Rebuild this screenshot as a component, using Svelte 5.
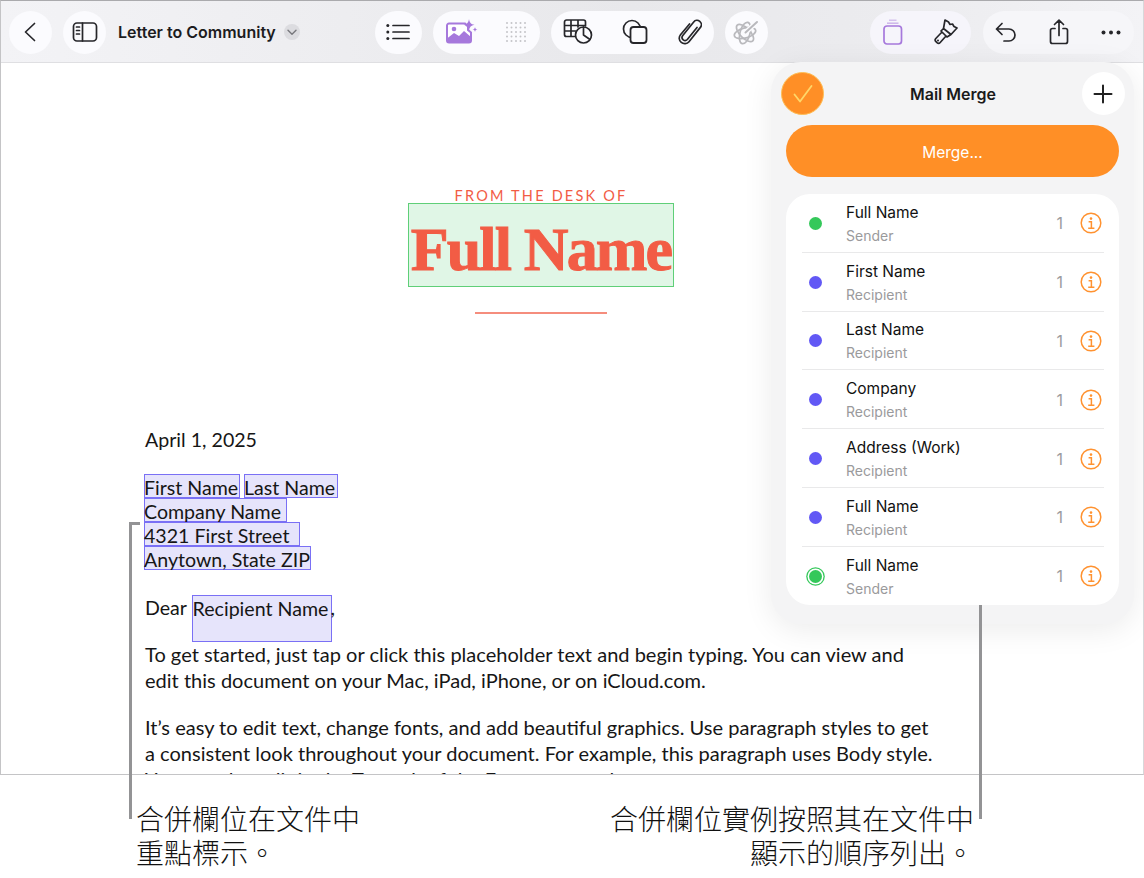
<script>
	const fields = [
		{ name: 'Full Name', role: 'Sender', color: 'green' },
		{ name: 'First Name', role: 'Recipient', color: 'violet' },
		{ name: 'Last Name', role: 'Recipient', color: 'violet' },
		{ name: 'Company', role: 'Recipient', color: 'violet' },
		{ name: 'Address (Work)', role: 'Recipient', color: 'violet' },
		{ name: 'Full Name', role: 'Recipient', color: 'violet' },
		{ name: 'Full Name', role: 'Sender', color: 'green', current: true }
	];
</script>

<div class="figure">
	<div class="window">
		<header class="toolbar">
			<button class="pill round" type="button" aria-label="Back">
				<svg width="24" height="24" viewBox="0 0 24 24"><path class="ink thin" d="M15.500 3.500 6.500 12l9 8.500" /></svg>
			</button>
			<button class="pill round" type="button" aria-label="Sidebar">
				<svg width="26" height="24" viewBox="0 0 26 24"><rect class="ink thin" x="1.500" y="3" width="23" height="18" rx="3.500" /><path class="ink thin" d="M10.500 3v18" /><path class="ink thin" d="M4.500 7h3M4.500 10.500h3M4.500 14h3" /></svg>
			</button>
			<span class="doc-title">Letter to Community</span>
			<span class="title-chevron">
				<svg width="10" height="7" viewBox="0 0 10 7"><path d="M1 1.200 5 5.200l4-4" fill="none" stroke="#77777c" stroke-width="1.400" stroke-linecap="round" stroke-linejoin="round" /></svg>
			</span>

			<button class="pill list-btn" type="button" aria-label="List">
				<svg width="24" height="20" viewBox="0 0 24 20"><path class="ink thin" d="M7 3.500h16M7 10h16M7 16.500h16" /><circle cx="1.800" cy="3.500" r="1.500" fill="#26262a" /><circle cx="1.800" cy="10" r="1.500" fill="#26262a" /><circle cx="1.800" cy="16.500" r="1.500" fill="#26262a" /></svg>
			</button>

			<div class="pill media">
				<svg width="32" height="26" viewBox="0 0 32 26"><path d="M3 4.500h16l3 3v3.500l3 2.500V21.500a2 2 0 0 1-2 2H3a2 2 0 0 1-2-2V6.500a2 2 0 0 1 2-2Z" fill="#fff" stroke="#a678dc" stroke-width="2" /><path d="M1 19.500l7-5.500 5 3 5-5 7 6v3.500a2 2 0 0 1-2 2H3a2 2 0 0 1-2-2Z" fill="#a678dc" /><circle cx="8" cy="10" r="2.300" fill="#a678dc" /><path d="M23 0c.5 3.600 2 5.200 5.500 5.800C25 6.400 23.500 8 23 11.500c-.5-3.500-2-5.100-5.500-5.700C21 5.200 22.500 3.600 23 0Z" fill="#a678dc" /><path d="M29 8c.2 1.600.8 2.300 2.500 2.500-1.700.2-2.300.9-2.500 2.500-.2-1.600-.8-2.300-2.500-2.500 1.700-.2 2.300-.9 2.500-2.500Z" fill="#a678dc" /></svg>
				<svg class="dots" width="22" height="22" viewBox="0 0 22 22">
					{#each [2, 6.500, 11, 15.500, 20] as y}
						{#each [2, 6.500, 11, 15.500, 20] as x}
							<circle cx={x} cy={y} r="1" fill="#c4c4c8" />
						{/each}
					{/each}
				</svg>
			</div>

			<div class="pill insert">
				<svg width="30" height="26" viewBox="0 0 30 26"><path class="ink thin" d="M12 17.500H3.500a2 2 0 0 1-2-2V3a2 2 0 0 1 2-2h17a2 2 0 0 1 2 2v4M1.500 6.500h21M1.500 12h11M8 1v16.500M15 1v7" /><circle cx="20.500" cy="16" r="8" fill="#fbfbfe" stroke="#26262a" stroke-width="1.700" /><path class="ink thin" d="M20.500 16V8M20.500 16l6.500 4.500" /></svg>
				<svg width="26" height="26" viewBox="0 0 26 26"><circle class="ink thin" cx="10" cy="10" r="8.500" /><rect x="8.500" y="8" width="16" height="16" rx="3" fill="#fbfbfe" stroke="#26262a" stroke-width="1.800" /></svg>
				<svg width="24" height="26" viewBox="0 0 24 26"><path class="ink thin" d="M19 8.500 9.300 20.500a3 3 0 0 1-4.700-3.700L15.700 3a4.300 4.300 0 0 1 6.700 5.400L11 22.700a5.500 5.500 0 0 1-8.500-7L11.500 5" /></svg>
			</div>

			<button class="pill round faded" type="button" aria-label="Writing tools">
				<svg width="28" height="26" viewBox="0 0 28 26" fill="none" stroke="#b9b9bd" stroke-width="1.700"><ellipse cx="13" cy="14" rx="11" ry="5" transform="rotate(45 13 14)" /><ellipse cx="13" cy="14" rx="11" ry="5" transform="rotate(-15 13 14)" /><ellipse cx="13" cy="14" rx="11" ry="5" transform="rotate(105 13 14)" /><path d="M13 14 26 2" stroke="#fbfbfe" stroke-width="5" /><path d="M13.500 13.500 25 3" stroke-width="2" stroke-linecap="round" /></svg>
			</button>

			<div class="pill format">
				<svg width="20" height="26" viewBox="0 0 20 26"><rect x="1" y="7" width="17.500" height="18" rx="3" fill="none" stroke="#a678dc" stroke-width="1.700" /><path d="M4 4.200h11.500" stroke="#cdb4ea" stroke-width="1.500" /><path d="M6 1.200h7.500" stroke="#cdb4ea" stroke-width="1.200" /></svg>
				<svg width="24" height="26" viewBox="0 0 24 26"><path class="ink thin" d="M11 1 14.500 3 16 5.500 18.500 5 20 7.500 23 9 17 15.500 9.500 9.500ZM9.500 9.500 7 12l6 6 4-2.500M8 13 1.800 19.500a2.300 2.300 0 0 0 .2 3.200l1 1a2.300 2.300 0 0 0 3.200-.2L12 17" /><circle cx="4" cy="21.500" r="1" fill="#26262a" /></svg>
			</div>

			<div class="pill actions">
				<svg width="22" height="20" viewBox="0 0 22 20"><path class="ink thin" d="M7 1.500 1.500 7 7 12.500M1.500 7H14a6 6 0 0 1 0 12h-5" /></svg>
				<svg width="20" height="26" viewBox="0 0 20 26"><path class="ink thin" d="M6 9.500H3.500a2 2 0 0 0-2 2v11a2 2 0 0 0 2 2h13a2 2 0 0 0 2-2v-11a2 2 0 0 0-2-2H14M10 16.500V1.500M5.500 5.500 10 1.200l4.500 4.300" /></svg>
				<svg width="20" height="5" viewBox="0 0 20 5"><circle cx="2.500" cy="2.500" r="2" fill="#26262a" /><circle cx="10" cy="2.500" r="2" fill="#26262a" /><circle cx="17.500" cy="2.500" r="2" fill="#26262a" /></svg>
			</div>
		</header>

		<main class="page">
			<div class="letterhead">
				<p class="desk">FROM THE DESK OF</p>
				<h1 class="sender">Full Name</h1>
				<div class="rule"></div>
			</div>

			<p class="date">April 1, 2025</p>

			<div class="address">
				<div><span class="field w-first">First Name</span><span class="field w-last">Last Name</span></div>
				<div><span class="field w-company">Company Name</span></div>
				<div><span class="field w-street">4321 First Street</span></div>
				<div><span class="field w-town">Anytown, State ZIP</span></div>
			</div>

			<p class="dear">Dear <span class="field w-recipient">Recipient Name</span>,</p>

			<p class="body-text">To get started, just tap or click this placeholder text and begin typing. You can view and edit this document on your Mac, iPad, iPhone, or on iCloud.com.</p>
			<p class="body-text">It’s easy to edit text, change fonts, and add beautiful graphics. Use paragraph styles to get a consistent look throughout your document. For example, this paragraph uses Body style. You can also edit in the Text tab of the Format controls.</p>
		</main>

		<aside class="panel">
			<div class="panel-head">
				<button class="done" type="button" aria-label="Done">
					<svg width="22" height="20" viewBox="0 0 22 20"><path d="M2.500 10.500 8 17.500 19.500 2" fill="none" stroke="#ffd769" stroke-width="1.800" stroke-linecap="round" stroke-linejoin="round" /></svg>
				</button>
				<h2>Mail Merge</h2>
				<button class="add" type="button" aria-label="Add">
					<svg width="20" height="20" viewBox="0 0 20 20"><path d="M10 1.500v17M1.500 10h17" stroke="#222" stroke-width="2" stroke-linecap="round" /></svg>
				</button>
			</div>
			<button class="merge" type="button">Merge...</button>
			<ul class="field-list">
				{#each fields as f}
					<li>
						<span class="dot {f.color}" class:current={f.current}></span>
						<div class="field-text">
							<strong>{f.name}</strong>
							<small>{f.role}</small>
						</div>
						<span class="count">1</span>
						<svg class="info" width="22" height="22" viewBox="0 0 22 22"><circle cx="11" cy="11" r="9.800" fill="none" stroke="#ff9230" stroke-width="1.500" /><circle cx="11" cy="6.600" r="1.300" fill="#ff9230" /><path d="M8.600 9.800H11.400V16M8.200 16.200h6.200" fill="none" stroke="#ff9230" stroke-width="1.500" /></svg>
					</li>
				{/each}
			</ul>
		</aside>
	</div>

	<div class="captions">
		<p>合併欄位在文件中<br />重點標示。</p>
		<p class="right">合併欄位實例按照其在文件中<br />顯示的順序列出。</p>
	</div>

	<!-- callout leaders drawn over the screenshot -->
	<div class="leader left"></div>
	<div class="leader right"></div>
</div>

<style>
	:global(body) {
		margin: 0;
		background: #fff;
	}

	.figure {
		position: relative;
		width: 1144px;
		height: 878px;
		overflow: hidden;
		font-family: Inter, "Noto Sans", sans-serif;
		color: #111;
	}

	.window {
		position: relative;
		height: 775px;
		box-sizing: border-box;
		border: 1px solid #c4c4c6;
		border-top-color: #aaaaad;
		border-right-color: #d8d8da;
		overflow: hidden;
	}

	.toolbar {
		height: 62px;
		box-sizing: border-box;
		display: flex;
		align-items: center;
		padding: 1px 9px 0 8px;
		background: linear-gradient(90deg, #f3f3f6 0%, #eeeef1 25%, #e8e8eb 55%, #ececef 80%, #f3f3f6 100%);
		border-bottom: 1px solid #dfdfe2;
	}

	.pill {
		height: 43px;
		border: 0;
		border-radius: 22px;
		padding: 0;
		background: #fbfbfe;
		display: flex;
		align-items: center;
		flex-shrink: 0;
	}

	.round {
		width: 43px;
		justify-content: center;
		margin-right: 11px;
	}

	.doc-title {
		margin-left: 1px;
		font-size: 16px;
		font-weight: 600;
		letter-spacing: 0;
		color: #1c1c1e;
		white-space: nowrap;
	}

	.title-chevron {
		width: 16px;
		height: 16px;
		margin-left: 8px;
		margin-right: 75px;
		border-radius: 50%;
		background: #dcdce0;
		display: grid;
		place-items: center;
	}

	.list-btn {
		width: 47px;
		justify-content: center;
		margin-right: 11px;
	}

	.media {
		width: 107px;
		justify-content: space-between;
		box-sizing: border-box;
		padding: 0 13px 0 13px;
		margin-right: 11px;
	}

	.insert {
		width: 163px;
		justify-content: space-between;
		box-sizing: border-box;
		padding: 0 12px 0 12px;
		margin-right: 11px;
	}

	.faded {
		margin-right: 102px;
	}

	.format {
		width: 101px;
		justify-content: space-between;
		box-sizing: border-box;
		padding: 0 13px 0 13px;
		margin-right: 12px;
		background: #f6f5fb;
	}

	.actions {
		width: 151px;
		justify-content: space-between;
		box-sizing: border-box;
		padding: 0 13px 0 12px;
		background: #f6f6f9;
	}

	.ink {
		fill: none;
		stroke: #26262a;
		stroke-width: 2;
		stroke-linecap: round;
		stroke-linejoin: round;
	}

	.thin {
		stroke-width: 1.700;
	}

	.page {
		padding: 122px 0 0 144px;
		width: 792px;
		font-family: Lato, "Open Sans", sans-serif;
		font-size: 19.600px;
		line-height: 24px;
		color: #161616;
	}

	.page p {
		margin: 0;
	}

	.letterhead {
		display: flex;
		flex-direction: column;
		align-items: center;
	}

	.page .desk {
		font-size: 14.500px;
		line-height: 22px;
		margin-bottom: -4px;
		letter-spacing: 2.200px;
		color: #f25c45;
	}

	.sender {
		width: 266px;
		height: 84px;
		box-sizing: border-box;
		margin: 0;
		border: 1px solid #5fcf78;
		background: #e0f6e6;
		text-align: center;
		font-family: "Liberation Serif", serif;
		font-size: 62px;
		line-height: 90px;
		font-weight: 700;
		letter-spacing: -0.030em;
		color: #f25c45;
		-webkit-text-stroke: 1px #f25c45;
		white-space: nowrap;
	}

	.rule {
		width: 132px;
		height: 2px;
		margin-top: 25px;
		background: #f58d7d;
	}

	.page .date {
		margin-top: 114px;
	}

	.address {
		margin: 22px 0 0 -1px;
	}

	.address div {
		height: 24px;
		display: flex;
		gap: 4px;
	}

	.field {
		display: inline-block;
		box-sizing: border-box;
		height: 24px;
		border: 1px solid #7a70f5;
		background: #e6e4fb;
		white-space: nowrap;
		line-height: 25px;
		text-indent: -1px;
		overflow: visible;
	}

	.w-first { width: 96px; }
	.w-last { width: 94px; }
	.w-company { width: 143px; }
	.w-street { width: 156px; }
	.w-town { width: 167px; }

	.w-recipient {
		width: 140px;
		height: 47px;
		margin-bottom: -23px;
		margin-right: -1px;
		text-indent: 0;
		vertical-align: top;
	}

	.page .dear {
		margin-top: 25px;
		height: 25px;
		line-height: 26px;
	}

	.page .body-text {
		margin-top: 21px;
		font-size: 20.050px;
		line-height: 26px;
		width: 792px;
	}

	.panel {
		position: absolute;
		top: 61px;
		left: 770px;
		width: 363px;
		height: 562px;
		box-sizing: border-box;
		padding: 10px 15px 20px;
		border-radius: 30px;
		background: #f4f4f5;
		box-shadow: 0 6px 30px rgba(0, 0, 0, 0.08);
	}

	.panel-head {
		display: flex;
		align-items: center;
		justify-content: space-between;
		margin: 0 -6px 10px -5px;
	}

	.panel-head h2 {
		margin: 0;
		font-size: 16px;
		font-weight: 600;
		color: #1a1a1a;
	}

	.done,
	.add {
		width: 43px;
		height: 43px;
		padding: 0;
		border-radius: 50%;
		display: grid;
		place-items: center;
		flex-shrink: 0;
	}

	.done {
		border: 1px solid #ffbe55;
		background: #ff8f26;
	}

	.add {
		border: 0;
		background: #fff;
	}

	.merge {
		display: block;
		width: 100%;
		height: 52px;
		padding: 2px 0 0;
		border: 0;
		border-radius: 26px;
		background: #ff8f26;
		color: #fff;
		font: inherit;
		font-size: 15.500px;
	}

	.field-list {
		list-style: none;
		margin: 17px 0 0;
		padding: 0;
		height: 411px;
		border-radius: 24px;
		background: #fff;
	}

	.field-list li {
		position: relative;
		height: 58.800px;
		display: grid;
		grid-template-columns: 60px 1fr auto 22px;
		align-items: center;
		padding: 0 17px 0 0;
	}

	.field-list li:not(:last-child)::after {
		content: "";
		position: absolute;
		left: 16px;
		right: 15px;
		bottom: 0;
		height: 1px;
		background: #e9e9ea;
	}

	.dot {
		width: 13px;
		height: 13px;
		margin-left: 23px;
		border-radius: 50%;
	}

	.dot.green { background: #34c85a; }
	.dot.violet { background: #6258f5; }

	.dot.current {
		box-shadow: 0 0 0 1.500px #fff, 0 0 0 2.800px #34c85a;
	}

	.field-text {
		display: flex;
		flex-direction: column;
		gap: 4px;
	}

	.field-text strong {
		margin-top: 1px;
		font-size: 15.500px;
		font-weight: 400;
		line-height: 20px;
		color: #111;
	}

	.field-text small {
		font-size: 14px;
		line-height: 18px;
		color: #9a9a9c;
	}

	.count {
		margin-right: 17px;
		font-size: 16px;
		color: #9c9c9e;
	}

	.captions {
		display: flex;
		justify-content: space-between;
		padding: 26px 170px 0 136px;
		font-family: "Noto Sans CJK TC", "Noto Sans", sans-serif;
		font-size: 28px;
		line-height: 34px;
		font-weight: 300;
		color: #111;
	}

	.captions p {
		margin: 0;
	}

	.captions .right {
		text-align: right;
	}

	.leader {
		position: absolute;
		background: #939395;
		width: 3px;
	}

	.leader.left {
		left: 129px;
		top: 522px;
		height: 297px;
	}

	.leader.left::before {
		content: "";
		position: absolute;
		left: 0;
		top: 0;
		width: 11px;
		height: 3px;
		background: #939395;
	}

	.leader.right {
		left: 979px;
		top: 605px;
		height: 214px;
	}
</style>
